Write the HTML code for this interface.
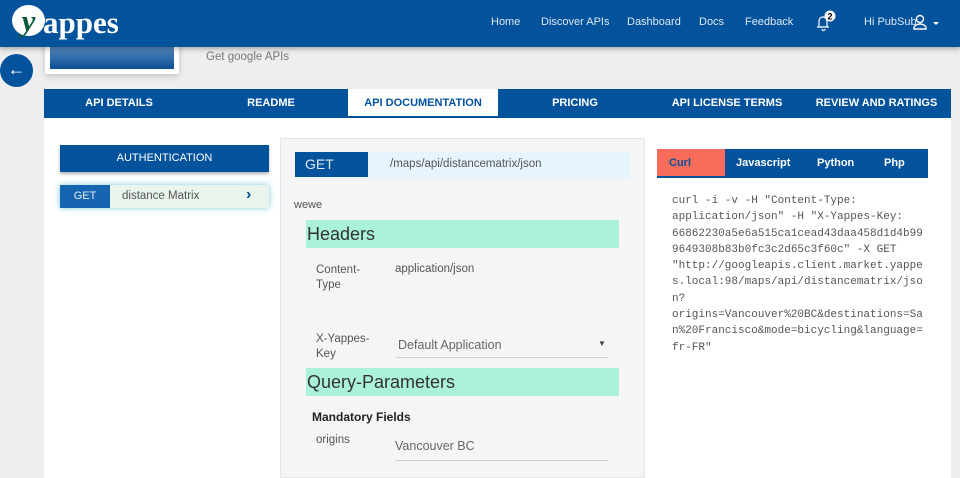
<!DOCTYPE html>
<html><head><meta charset="utf-8"><style>
*{margin:0;padding:0;box-sizing:border-box}
body{width:960px;height:470px;overflow:hidden;background:#eeeeee;font-family:"Liberation Sans",sans-serif;position:relative}
.nav{position:absolute;left:0;top:0;width:960px;height:47px;background:#03529c;box-shadow:0 2px 5px rgba(0,0,0,.3);z-index:5}
.logo{position:absolute;left:12px;top:5px;color:#fff;font-family:"Liberation Serif",serif;font-weight:bold;font-size:31px;letter-spacing:0}
.logo .y{display:inline-block;width:33px;height:31px;border-radius:50%;background:#fff;color:#0b5a3a;text-align:center;line-height:31px;font-style:italic;vertical-align:top;margin-right:-2px}
.nl{position:absolute;top:16px;color:#dfe8f3;font-size:11px}
.tabs{position:absolute;left:44px;top:89px;width:907px;height:29px;background:#03529c;}
.tab{position:absolute;top:0;height:29px;line-height:29px;color:#fff;font-weight:bold;font-size:11px;text-align:center}
.card{position:absolute;left:44px;top:118px;width:907px;height:360px;background:#fff}
.mono{font-family:"Liberation Mono",monospace;font-size:11px;line-height:16.3px;color:#555;position:absolute;left:672px;top:193px;white-space:pre}
.t{position:absolute;color:#555;font-size:11.5px}
</style></head><body>
<div class="nav">
<div class="logo"><span class="y">y</span>appes</div>
<div class="nl" style="left:491px">Home</div>
<div class="nl" style="left:541px">Discover APIs</div>
<div class="nl" style="left:627px">Dashboard</div>
<div class="nl" style="left:699px">Docs</div>
<div class="nl" style="left:745px">Feedback</div>
<svg style="position:absolute;left:814px;top:10px" width="24" height="22" viewBox="0 0 24 22"><path d="M3 17h12M5 17v-6a4 4 0 0 1 8 0v6M8 19a1.5 1.5 0 0 0 3 0" fill="none" stroke="#dfe8f3" stroke-width="1.4"/><circle cx="16" cy="6" r="5.5" fill="#fff"/><text x="16" y="9.5" font-size="9" font-weight="bold" text-anchor="middle" font-family="Liberation Sans">2</text></svg>
<div class="nl" style="left:864px">Hi PubSub</div>
<svg style="position:absolute;left:913px;top:14px" width="30" height="18" viewBox="0 0 30 18"><circle cx="7" cy="5" r="3.5" fill="none" stroke="#fff" stroke-width="1.4"/><path d="M1 15v-1a6 4 0 0 1 12 0v1z" fill="none" stroke="#fff" stroke-width="1.4"/><path d="M20 8h6l-3 3z" fill="#fff"/></svg>
</div>
<div style="position:absolute;left:45px;top:40px;width:134px;height:34px;background:#fff;box-shadow:0 2px 6px rgba(0,0,0,.2)"></div>
<div style="position:absolute;left:50px;top:44px;width:124px;height:25px;background:linear-gradient(#5f8fc0,#0b4f95)"></div>
<div class="t" style="left:206px;top:51px;color:#777;font-size:11.5px">Get google APIs</div>
<div style="position:absolute;left:0;top:54px;width:33px;height:33px;border-radius:50%;background:#03529c;color:#fff;font-size:18px;text-align:center;line-height:31px">&#8592;</div>
<div class="tabs">
<div class="tab" style="left:0;width:150px">API DETAILS</div>
<div class="tab" style="left:150px;width:154px">README</div>
<div class="tab" style="left:304px;width:150px;background:#fff;color:#03529c;border-bottom:2px solid #03529c">API DOCUMENTATION</div>
<div class="tab" style="left:454px;width:154px">PRICING</div>
<div class="tab" style="left:608px;width:150px">API LICENSE TERMS</div>
<div class="tab" style="left:758px;width:149px">REVIEW AND RATINGS</div>
</div>
<div class="card"></div>
<div style="position:absolute;left:60px;top:145px;width:209px;height:27px;background:#03529c;color:#fff;font-size:11px;text-align:center;line-height:27px;box-shadow:0 2px 3px rgba(0,0,0,.3)">AUTHENTICATION</div>
<div style="position:absolute;left:60px;top:185px;width:209px;height:23px;background:#e9f5ec;box-shadow:0 0 6px #7cc8d8">
<div style="position:absolute;left:0;top:0;width:50px;height:23px;background:#1565b0;color:#e6eef7;font-size:11px;text-align:center;line-height:23px">GET</div>
<div style="position:absolute;left:62px;top:5px;font-size:11.5px;color:#555">distance Matrix</div>
<div style="position:absolute;left:186px;top:1px;font-size:16px;color:#03529c;font-weight:bold">&#8250;</div>
</div>
<div style="position:absolute;left:280px;top:138px;width:365px;height:340px;background:#f5f5f5;border:1px solid #e6e6e6"></div>
<div style="position:absolute;left:295px;top:152px;width:335px;height:27px;background:#e6f4fd"></div>
<div style="position:absolute;left:295px;top:152px;width:73px;height:25px;background:#03529c;color:#dfe8f3;font-size:14px;line-height:25px;padding-left:10px">GET</div>
<div class="t" style="left:390px;top:158px;color:#555;font-size:11.5px">/maps/api/distancematrix/json</div>
<div class="t" style="left:294px;top:199px;font-size:11px">wewe</div>
<div style="position:absolute;left:306px;top:220px;width:313px;height:28px;background:#abf2da;font-size:18px;color:#333;line-height:28px;padding-left:1px">Headers</div>
<div class="t" style="left:316px;top:263px;line-height:15px">Content-<br>Type</div>
<div class="t" style="left:395px;top:263px">application/json</div>
<div style="position:absolute;left:306px;top:314px;width:313px;height:1px;background:#f0f0f0"></div>
<div class="t" style="left:316px;top:332px;line-height:15px">X-Yappes-<br>Key</div>
<div class="t" style="left:398px;top:338px;font-size:12.5px;color:#666">Default Application</div>
<div style="position:absolute;left:598px;top:339px;font-size:8px;color:#444">&#9660;</div>
<div style="position:absolute;left:396px;top:357px;width:212px;height:1px;background:#ccc"></div>
<div style="position:absolute;left:306px;top:368px;width:313px;height:28px;background:#abf2da;font-size:18px;color:#333;line-height:28px;padding-left:1px">Query-Parameters</div>
<div class="t" style="left:312px;top:410px;font-weight:bold;color:#222;font-size:12px">Mandatory Fields</div>
<div class="t" style="left:316px;top:434px">origins</div>
<div class="t" style="left:395px;top:439px;font-size:12.5px;color:#666">Vancouver BC</div>
<div style="position:absolute;left:395px;top:460px;width:213px;height:1px;background:#ccc"></div>
<div style="position:absolute;left:657px;top:149px;width:271px;height:29px;background:#03529c"></div>
<div style="position:absolute;left:657px;top:149px;width:68px;height:29px;background:#f96c5c;border-bottom:2px solid #03529c;color:#03529c;font-size:11px;font-weight:bold;line-height:28px;padding-left:12px">Curl</div>
<div class="tab" style="left:736px;top:149px;font-size:11px">Javascript</div>
<div class="tab" style="left:817px;top:149px;font-size:11px">Python</div>
<div class="tab" style="left:884px;top:149px;font-size:11px">Php</div>
<div class="mono">curl -i -v -H "Content-Type:
application/json" -H "X-Yappes-Key:
66862230a5e6a515ca1cead43daa458d1d4b99
9649308b83b0fc3c2d65c3f60c" -X GET
"http://googleapis.client.market.yappe
s.local:98/maps/api/distancematrix/jso
n?
origins=Vancouver%20BC&amp;destinations=Sa
n%20Francisco&amp;mode=bicycling&amp;language=
fr-FR"</div>
</body></html>
